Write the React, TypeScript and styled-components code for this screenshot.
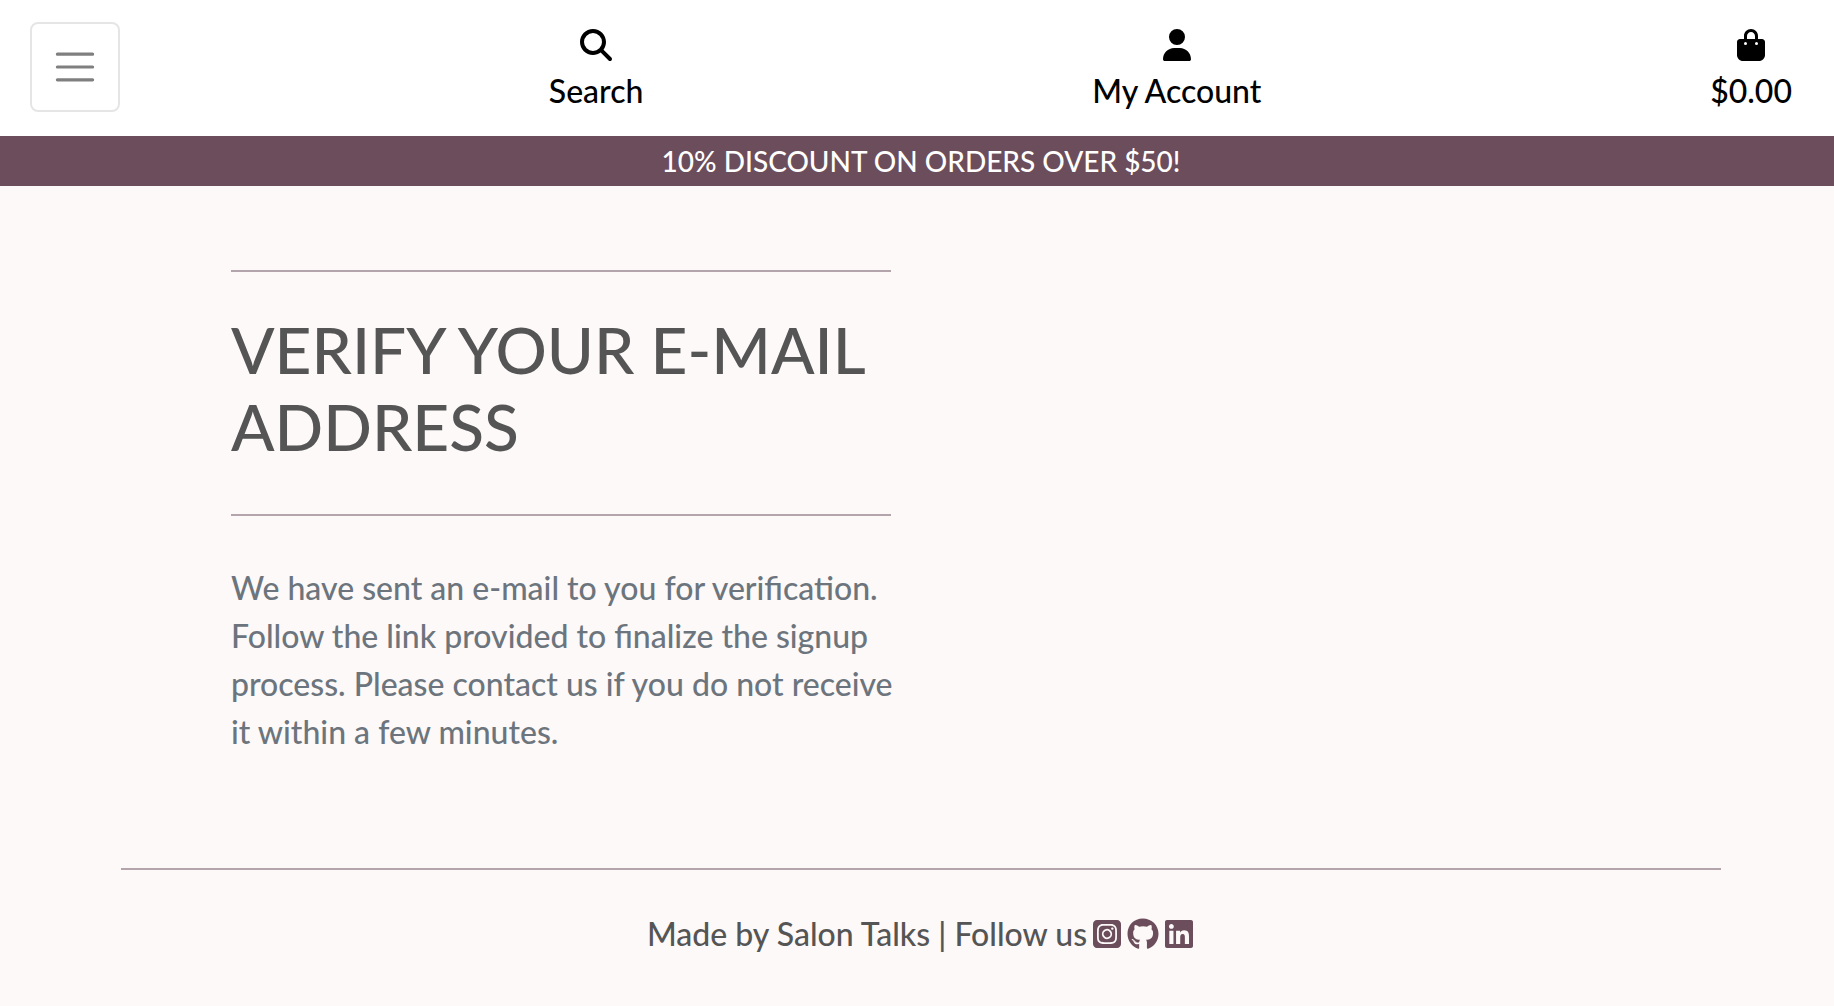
import React from "react";
import styled, { createGlobalStyle } from "styled-components";
import { FaMagnifyingGlass, FaUser, FaBagShopping, FaSquareInstagram, FaGithub, FaLinkedin } from "react-icons/fa6";

const GlobalStyle = createGlobalStyle`
  *, *::before, *::after { box-sizing: border-box; }
  body {
    margin: 0;
    background: #fdf9f8;
    color: #555;
    font-family: Lato, "Liberation Sans", sans-serif;
    font-size: 32px;
    font-weight: 500;
    line-height: 48px;
  }
`;

const Nav = styled.nav`
  display: flex;
  align-items: center;
  justify-content: space-between;
  min-height: 136px;
  padding: 16px 22px 18px 30px;
  background: #fff;
`;

const Toggler = styled.button`
  display: grid;
  place-items: center;
  width: 90px;
  height: 90px;
  padding: 0;
  border: 2px solid rgba(0, 0, 0, 0.1);
  border-radius: 8px;
  background: transparent;
  cursor: pointer;
`;

const NavLink = styled.a`
  display: flex;
  flex-direction: column;
  align-items: center;
  gap: 6px;
  padding: 10px 20px 0;
  color: #000;
  text-decoration: none;
`;

const Banner = styled.p`
  margin: 0;
  padding: 3px 0 3px 8px;
  background: #6b4d5b;
  color: #fff;
  font-size: 28px;
  line-height: 44px;
  text-align: center;
`;

const Page = styled.div`
  padding-left: 8px;
`;

const Container = styled.main`
  max-width: 1440px;
  margin: 0 auto;
  padding: 84px 30px 112px;
`;

const Column = styled.section`
  width: 50%;
  padding-right: 30px;
`;

const Rule = styled.hr`
  height: 2px;
  margin: 0;
  border: 0;
  background: #b4a5ac;
`;

const Title = styled.h1`
  margin: 39px 0 49px;
  font-size: 64px;
  font-weight: 500;
  line-height: 77px;
`;

const Message = styled.p`
  margin: 48px -16px 0 0;
  color: #6c757d;
`;

const Footer = styled.footer`
  max-width: 1600px;
  margin: 0 auto;
`;

const Credits = styled.div`
  display: flex;
  align-items: center;
  justify-content: center;
  gap: 4px;
  padding: 40px 0 48px;
`;

const SocialLink = styled.a`
  display: flex;
  color: #6b4d5b;

  svg {
    width: auto;
    height: 32px;
  }
`;

export default function App() {
  return (
    <>
      <GlobalStyle />
      <Nav>
        <Toggler type="button" aria-label="Toggle navigation">
          <svg width="48" height="48" viewBox="0 0 30 30" fill="none" stroke="#000" strokeOpacity="0.5" strokeWidth="2" strokeLinecap="round">
            <path d="M4 7h22M4 15h22M4 23h22" />
          </svg>
        </Toggler>
        <NavLink href="#search">
          <FaMagnifyingGlass size={32} />
          Search
        </NavLink>
        <NavLink href="#account">
          <FaUser size={32} />
          My Account
        </NavLink>
        <NavLink href="#bag">
          <FaBagShopping size={32} />
          $0.00
        </NavLink>
      </Nav>
      <Banner>10% DISCOUNT ON ORDERS OVER $50!</Banner>
      <Page>
        <Container>
          <Column>
            <Rule />
            <Title>VERIFY YOUR E-MAIL ADDRESS</Title>
            <Rule />
            <Message>
              We have sent an e-mail to you for verification. Follow the link provided to finalize the signup
              process. Please contact us if you do not receive it within a few minutes.
            </Message>
          </Column>
        </Container>
        <Footer>
          <Rule />
          <Credits>
            <span>Made by Salon Talks | Follow us</span>
            <SocialLink href="#instagram" aria-label="Instagram"><FaSquareInstagram /></SocialLink>
            <SocialLink href="#github" aria-label="GitHub"><FaGithub /></SocialLink>
            <SocialLink href="#linkedin" aria-label="LinkedIn"><FaLinkedin /></SocialLink>
          </Credits>
        </Footer>
      </Page>
    </>
  );
}
